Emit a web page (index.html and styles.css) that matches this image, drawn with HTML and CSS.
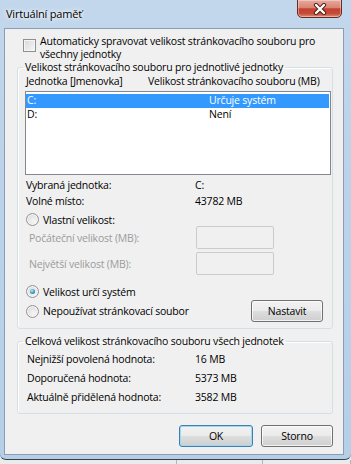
FILE: index.html
```html
<!DOCTYPE html>
<html lang="cs">
<head>
  <meta charset="UTF-8">
  <meta name="viewport" content="width=device-width, initial-scale=1.0">
  <title>Virtuální paměť</title>
  <link rel="stylesheet" href="styles.css">
</head>
<body>
  <div class="window">
    <div class="titlebar">
      <span class="title">Virtuální paměť</span>
      <button class="close" type="button">
        <svg width="14" height="12" viewBox="0 0 14 12">
          <path d="M3 2 L11 10 M11 2 L3 10" stroke="#4a1e1a" stroke-width="4.2" stroke-linecap="round"/>
          <path d="M3 2 L11 10 M11 2 L3 10" stroke="#fff" stroke-width="2.4" stroke-linecap="round"/>
        </svg>
      </button>
    </div>

    <div class="client">
      <label class="check-row">
        <span class="checkbox"></span>
        <span>Automaticky spravovat velikost stránkovacího souboru pro<br>všechny jednotky</span>
      </label>

      <fieldset class="group group-drives">
        <legend>Velikost stránkovacího souboru pro jednotlivé jednotky</legend>
        <div class="cols">
          <span>Jednotka [Jmenovka]</span>
          <span>Velikost stránkovacího souboru (MB)</span>
        </div>
        <ul class="listbox">
          <li class="selected"><span>C:</span><span>Určuje systém</span></li>
          <li><span>D:</span><span>Není</span></li>
        </ul>
        <div class="info">
          <span>Vybraná jednotka:</span><span>C:</span>
          <span>Volné místo:</span><span>43782 MB</span>
        </div>
        <label class="radio-row first">
          <span class="radio"></span>
          <span>Vlastní velikost:</span>
        </label>
        <div class="sizes">
          <span class="disabled">Počáteční velikost (MB):</span><span class="textbox"></span>
          <span class="disabled">Největší velikost (MB):</span><span class="textbox"></span>
        </div>
        <label class="radio-row system">
          <span class="radio checked"></span>
          <span>Velikost určí systém</span>
        </label>
        <div class="set-row">
          <label class="radio-row">
            <span class="radio"></span>
            <span>Nepoužívat stránkovací soubor</span>
          </label>
          <button class="btn btn-set" type="button">Nastavit</button>
        </div>
      </fieldset>

      <fieldset class="group group-total">
        <legend>Celková velikost stránkovacího souboru všech jednotek</legend>
        <div class="totals">
          <span>Nejnižší povolená hodnota:</span><span>16 MB</span>
          <span>Doporučená hodnota:</span><span>5373 MB</span>
          <span>Aktuálně přidělená hodnota:</span><span>3582 MB</span>
        </div>
      </fieldset>

      <div class="actions">
        <button class="btn btn-default" type="button">OK</button>
        <button class="btn btn-cancel" type="button">Storno</button>
      </div>
    </div>
  </div>
  <div class="behind">
    <span></span><span></span><span></span>
  </div>
</body>
</html>
```

FILE: styles.css
```css
body {
  margin: 0;
  width: 351px;
  height: 464px;
  overflow: hidden;
  background-color: #ebebeb;
  font-family: "Open Sans", "Noto Sans", sans-serif;
  font-size: 10.5px;
  letter-spacing: -0.2px;
  color: #000;
}
.window {
  background: linear-gradient(to bottom, #c3d7ec 0, #bcd3ea 30%, #b6cfe9 100%);
  padding-bottom: 4px;
  border-bottom: 1px solid #33414f;
  border-radius: 0 0 6px 6px;
}
.titlebar {
  display: flex;
  align-items: flex-start;
  height: 28px;
}
.title {
  margin: 7px 0 0 6px;
  font-size: 11px;
  line-height: 13px;
  text-shadow: 0 0 6px #fff, 0 0 3px #fff;
}
.close {
  margin-left: auto;
  margin-right: 9px;
  width: 45px;
  height: 19px;
  margin-top: -1px;
  padding: 0;
  display: flex;
  align-items: center;
  justify-content: center;
  border: 1px solid #6a2b24;
  border-radius: 0 0 5px 5px;
  background: linear-gradient(to bottom, #e8aa9e 0, #d98474 45%, #c4412f 52%, #c54c38 80%, #dd8e78 100%);
  box-shadow: inset 0 0 0 1px rgba(255, 255, 255, 0.35);
}
.client {
  margin: 0 7px 0 4px;
  border: 1px solid #8a9db2;
  background-color: #f0f0f0;
  padding: 6px 10px 7px 12px;
}
.check-row {
  display: flex;
  align-items: flex-start;
  line-height: 13px;
  padding-left: 6px;
}
.checkbox {
  width: 11px;
  height: 11px;
  margin: 4px 4px 0 0;
  border: 1px solid #8e8f8f;
  background: linear-gradient(135deg, #d5d8dc 0, #f7f7f7 100%);
  box-shadow: inset 0 0 0 1px #f5f5f5;
  flex-shrink: 0;
}
.group {
  margin: 0;
  padding: 0 1px 6px 5px;
  border: 1px solid #d5dfe5;
  border-radius: 3px;
  box-shadow: inset 1px 1px 0 #fff;
}
.group legend {
  padding: 0 2px;
  line-height: 13px;
}
.cols {
  display: flex;
  margin: 1px 0 0 3px;
  line-height: 13px;
}
.cols span:first-child {
  width: 122px;
}
.listbox {
  list-style: none;
  margin: 3px 0 0 2px;
  padding: 2px 1px 2px 0;
  height: 78px;
  border: 1px solid #828790;
  background-color: #fff;
}
.listbox li {
  display: grid;
  grid-template-columns: 182px 1fr;
  height: 14px;
  line-height: 13px;
  padding-left: 1px;
}
.listbox li.selected {
  background-color: #3399ff;
  color: #fff;
}
.info {
  display: grid;
  grid-template-columns: 169px 1fr;
  grid-auto-rows: 16px;
  align-items: center;
  margin: 2px 0 0 3px;
}
.radio-row {
  display: flex;
  align-items: center;
  height: 13px;
  margin-left: 3px;
}
.radio-row.first {
  margin-top: 4px;
}
.radio-row.system {
  margin-top: 10px;
}
.radio {
  position: relative;
  width: 11px;
  height: 11px;
  margin-right: 4px;
  border: 1px solid #929292;
  border-radius: 50%;
  background: radial-gradient(circle at 60% 65%, #f6f6f6 0, #dedede 70%, #cfcfcf 100%);
  box-shadow: inset 0 0 0 1px #f7f7f7;
  flex-shrink: 0;
}
.radio.checked::after {
  content: "";
  position: absolute;
  left: 3px;
  top: 3px;
  width: 5px;
  height: 5px;
  border-radius: 50%;
  background: radial-gradient(circle at 40% 35%, #b8ecfb 0, #3a98c4 55%, #0f4d75 100%);
}
.sizes {
  display: grid;
  grid-template-columns: 167px 78px;
  grid-auto-rows: 23px;
  row-gap: 3px;
  align-items: center;
  margin-left: 6px;
}
.disabled {
  color: #9b9b9b;
}
.textbox {
  height: 21px;
  border: 1px solid #cbcbcb;
  border-radius: 2px;
}
.set-row {
  display: flex;
  justify-content: space-between;
  align-items: center;
  margin-top: 2px;
}
.btn {
  height: 22px;
  padding: 0;
  font-family: inherit;
  font-size: 10.5px;
  letter-spacing: -0.2px;
  color: #000;
  border: 1px solid #707070;
  border-radius: 3px;
  background: linear-gradient(to bottom, #f2f2f2 0, #ebebeb 48%, #dddddd 52%, #cfcfcf 100%);
  box-shadow: inset 0 0 0 1px rgba(255, 255, 255, 0.75);
}
.btn-set {
  width: 72px;
  margin-right: 8px;
}
.group-total {
  margin-top: 6px;
  padding-bottom: 7px;
}
.totals {
  display: grid;
  grid-template-columns: 168px 1fr;
  grid-auto-rows: 19px;
  align-items: center;
  margin: 1px 0 0 4px;
}
.actions {
  display: flex;
  justify-content: flex-end;
  gap: 8px;
  margin-top: 11px;
}
.btn-default {
  width: 74px;
  border-color: #3c7fb1;
  box-shadow: inset 0 0 0 1px #9fd8f5;
}
.btn-cancel {
  width: 72px;
}
.behind {
  display: grid;
  grid-template-columns: 177px 86px 1fr;
  height: 5px;
}
.behind span {
  border-right: 1px solid #b5b5b5;
}
```
